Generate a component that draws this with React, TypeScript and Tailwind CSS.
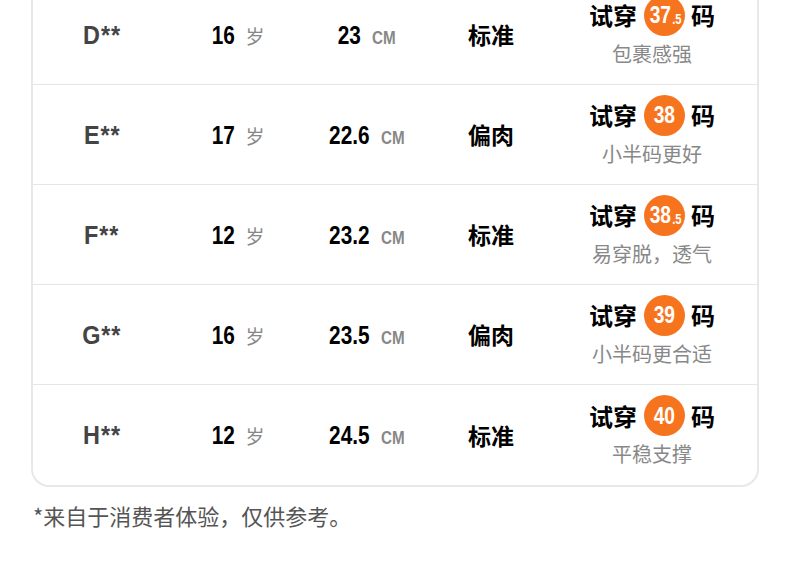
import React from 'react';

interface Row {
  name: string;
  age: string;
  length: string;
  fit: string;
  size: string;
  half?: boolean;
  note: string;
}

const rows: Row[] = [
  { name: 'D**', age: '16', length: '23', fit: '标准', size: '37', half: true, note: '包裹感强' },
  { name: 'E**', age: '17', length: '22.6', fit: '偏肉', size: '38', note: '小半码更好' },
  { name: 'F**', age: '12', length: '23.2', fit: '标准', size: '38', half: true, note: '易穿脱，透气' },
  { name: 'G**', age: '16', length: '23.5', fit: '偏肉', size: '39', note: '小半码更合适' },
  { name: 'H**', age: '12', length: '24.5', fit: '标准', size: '40', note: '平稳支撑' },
];

// no condensed face installed, so squeeze Liberation Sans Bold horizontally
const cond = "inline-block scale-x-[0.8] font-['Liberation_Sans',sans-serif] font-bold leading-none";

const App: React.FC = () => {
  return (
    <div className="w-[790px] h-[588px] overflow-hidden bg-white font-['Noto_Sans_CJK_SC','Noto_Sans',sans-serif]">
      <div className="mx-[31px] -mt-[17px] border-2 border-[#e8e8e8] rounded-b-[18px] bg-white">
        {rows.map((row, i) => (
          <div
            key={row.name}
            className={`grid grid-cols-[138px_134px_124px_124px_1fr] h-[100px] items-center ${
              i < rows.length - 1 ? 'border-b border-[#e6e6e6]' : ''
            }`}
          >
            {/* tester */}
            <div className="flex justify-center">
              <span className={`${cond} scale-x-[0.9] text-[26px] text-[#444] tracking-[1px]`}>{row.name}</span>
            </div>

            {/* age */}
            <div className="flex items-baseline justify-center">
              <span className={`${cond} origin-right text-[26px] text-black -ml-[6px]`}>{row.age}</span>
              <span className="ml-[11px] text-[19px] leading-none text-[#888]">岁</span>
            </div>

            {/* foot length */}
            <div className="flex items-baseline justify-center">
              <span
                className={`${cond} origin-right text-[26px] text-black ${
                  row.length.length > 2 ? '-ml-[10px]' : '-ml-[6px]'
                }`}
              >
                {row.length}
              </span>
              <span className={`${cond} origin-left text-[19px] text-[#888] ml-[11px] -mr-[6px]`}>CM</span>
            </div>

            {/* foot type */}
            <div className="text-center text-[23px] font-bold text-black">{row.fit}</div>

            {/* recommendation */}
            <div className="flex flex-col items-center pr-[6px] -mt-[8px]">
              <div className="flex items-center gap-[7px] text-[24px] font-bold text-black leading-none">
                <span>试穿</span>
                <span className="w-[41px] h-[41px] rounded-full bg-[#f7741f] text-white flex items-center justify-center">
                  <span className={`${cond} text-[24px] ${row.half ? '-mr-[3px]' : ''}`}>{row.size}</span>
                  {row.half && <span className={`${cond} text-[14px] mt-[8px] -mr-[1px]`}>.5</span>}
                </span>
                <span className="-ml-[1px]">码</span>
              </div>
              <div className="mt-[5px] text-[20px] text-[#888] leading-[26px]">{row.note}</div>
            </div>
          </div>
        ))}
      </div>
      <div className="ml-[33px] mt-[13px] text-[22px] leading-[30px] text-[#555]">*来自于消费者体验，仅供参考。</div>
    </div>
  );
};

export default App;
